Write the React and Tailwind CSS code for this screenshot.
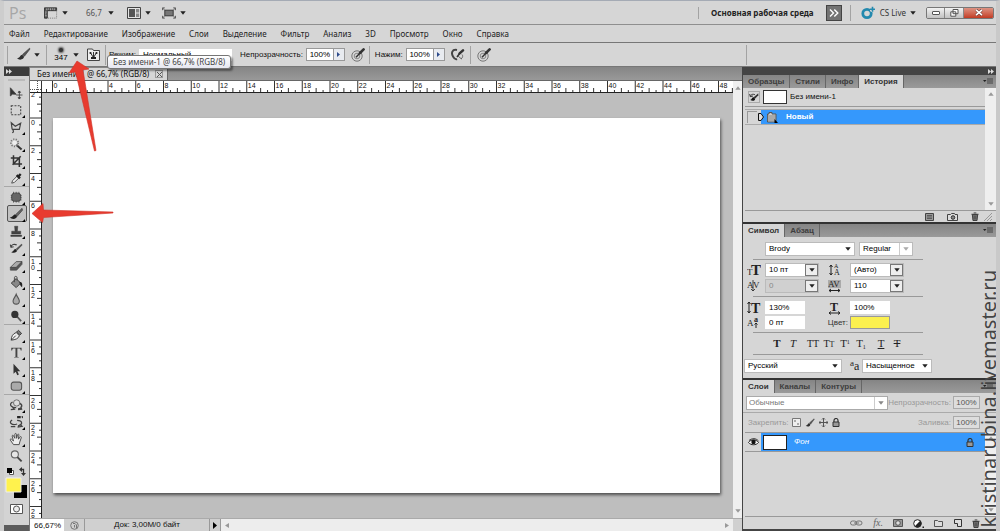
import React from 'react';

const MENU = ['Файл', 'Редактирование', 'Изображение', 'Слои', 'Выделение', 'Фильтр', 'Анализ', '3D', 'Просмотр', 'Окно', 'Справка'];

const UNIT = 27.75;

function Caret({ className = 'text-[#222]' }) {
  return (
    <svg width="6" height="4" viewBox="0 0 6 4" className={`shrink-0 ${className}`}>
      <path d="M0.3 0.3h5.4L3 3.8z" fill="currentColor" />
    </svg>
  );
}

function Divider({ className = 'h-4' }) {
  return <span className={`w-px shrink-0 bg-[#a3a3a3] ${className}`} />;
}

function BrushIcon({ size = 15 }) {
  return (
    <svg width={size} height={size} viewBox="0 0 15 15">
      <path d="M13.6 1.2L6.6 7.4 8.4 9.3 14 2z" fill="#555" stroke="#333" strokeWidth="0.6" />
      <path d="M6.2 7.8C4 7.9 4.6 10.6 1 11.6c2.6 2 7.2 1 7-2z" fill="#2f2f2f" />
    </svg>
  );
}

function TargetPen() {
  return (
    <svg width="14" height="14" viewBox="0 0 14 14" fill="none">
      <circle cx="6" cy="8" r="5.2" stroke="#777" />
      <circle cx="6" cy="8" r="2.8" stroke="#888" />
      <path d="M5 9.2L9.5 4.6" stroke="#333" strokeWidth="1.5" />
      <path d="M9 5L12.6 1.4" stroke="#333" strokeWidth="2.6" strokeLinecap="round" />
    </svg>
  );
}

function TopBar() {
  return (
    <header className="flex h-6 shrink-0 items-center border-b border-[#8f8f8f] bg-[#d6d6d6] pr-[2px] pl-[5px] font-['Noto_Sans']">
      <span className="w-[35px] font-['Open_Sans'] text-[16px] leading-6 text-[#a6a6a6]">Ps</span>
      <button aria-label="Линейки" className="flex items-center gap-1">
        <svg width="14" height="12" viewBox="0 0 15 12">
          <path d="M0.5 0.5h13v3h-10v8h-3z" fill="#555" stroke="#333" />
          <path d="M3 1v2M5 1v1.5M7 1v2M9 1v1.5M11 1v2M1 5h2M1 7h1.5M1 9h2" stroke="#ddd" strokeWidth="0.7" />
          <path d="M4.5 11.5h9v-8" fill="none" stroke="#777" strokeDasharray="1 1" />
        </svg>
        <Caret />
      </button>
      <button className="ml-[18px] flex items-center gap-[6px] text-[8px] text-[#555]">66,7 <Caret /></button>
      <button aria-label="Расположение" className="ml-[13px] flex items-center gap-1">
        <svg width="14" height="12" viewBox="0 0 14 12">
          <path d="M0.5 0.5h13v11h-13z" fill="#e4e4e4" stroke="#444" />
          <path d="M2 2h6v8H2z" fill="#555" />
          <path d="M9 2h3.2v3.4H9zM9 6.5h3.2V10H9z" fill="#888" />
        </svg>
        <Caret />
      </button>
      <button aria-label="Режим экрана" className="ml-[11px] flex items-center gap-1">
        <svg width="14" height="12" viewBox="0 0 15 12">
          <path d="M3 3h9v6H3z" fill="#777" stroke="#333" />
          <path d="M0.5 3V0.5H3M12 0.5h2.5V3M14.5 9v2.5H12M3 11.5H0.5V9M1 1l2 2M14 1l-2 2M1 11l2-2M14 11l-2-2" fill="none" stroke="#555" />
        </svg>
        <Caret />
      </button>
      <div className="ml-auto flex items-center">
        <Divider className="h-3" />
        <button className="mx-3 text-[8px] font-bold text-[#222]">Основная рабочая среда</button>
        <button aria-label="Ещё" className="flex size-4 items-center justify-center border border-[#444] bg-[#737373]">
          <svg width="10" height="8" viewBox="0 0 10 8" fill="none" stroke="#fff" strokeWidth="1.4">
            <path d="M1 0.5L4.5 4 1 7.5M5.3 0.5L8.8 4 5.3 7.5" />
          </svg>
        </button>
        <Divider className="mr-[10px] ml-2 h-4" />
        <button className="mr-[10px] flex items-center gap-1 text-[8px] text-[#333]">
          <svg width="15" height="14" viewBox="0 0 15 14">
            <circle cx="6" cy="7.5" r="4.2" fill="none" stroke="#2389ae" strokeWidth="2.8" />
            <path d="M11.5 1v5M9 3.5h5" stroke="#d6d6d6" strokeWidth="3.4" />
            <path d="M11.5 0.8v5M9 3.3h5" stroke="#2389ae" strokeWidth="1.6" />
          </svg>
          CS Live <Caret />
        </button>
        <div className="flex h-3 overflow-hidden rounded-[2px] border border-[#777]">
          <button aria-label="Свернуть" className="flex w-[18px] items-center justify-center border-r border-[#888] bg-linear-to-b from-[#f2f2f2] to-[#c2c2c2]">
            <span className="h-1 w-2 rounded-[1px] border border-[#555] bg-white" />
          </button>
          <button aria-label="Восстановить" className="flex w-[19px] items-center justify-center border-r border-[#888] bg-linear-to-b from-[#f2f2f2] to-[#c2c2c2]">
            <svg width="9" height="8" viewBox="0 0 9 8" fill="#fff" stroke="#555">
              <path d="M3 0.5h5v4.2H3zM0.8 2.8h5v4.4h-5z" />
            </svg>
          </button>
          <button aria-label="Закрыть" className="flex w-[29px] items-center justify-center bg-linear-to-b from-[#dd9282] to-[#c23a22]">
            <svg width="8" height="7" viewBox="0 0 8 7">
              <path d="M1 0.8L7 6.2M7 0.8L1 6.2" stroke="#6b3a35" strokeWidth="2.8" />
              <path d="M1 0.8L7 6.2M7 0.8L1 6.2" stroke="#fff" strokeWidth="1.6" />
            </svg>
          </button>
        </div>
      </div>
    </header>
  );
}

function MenuBar() {
  return (
    <nav className="flex h-[17px] shrink-0 items-center gap-[14px] bg-[#d6d6d6] pl-[5px] font-['Noto_Sans'] text-[8px] text-[#222]">
      {MENU.map((item) => (
        <button key={item}>{item}</button>
      ))}
    </nav>
  );
}

function PercentField({ id, label }) {
  return (
    <>
      <label htmlFor={id}>{label}</label>
      <span className="ml-[3px] flex h-[13px] border border-[#999]">
        <input id={id} defaultValue="100%" className="w-[26px] bg-white text-center text-[8px] font-normal text-black" />
        <button aria-label={label} className="flex w-[11px] items-center justify-center border-l border-[#999] bg-[#e8ebf0]">
          <svg width="3" height="5" viewBox="0 0 3 5"><path d="M0 0l3 2.5L0 5z" fill="#2c4a8a" /></svg>
        </button>
      </span>
    </>
  );
}

function OptionsBar() {
  return (
    <div className="relative flex h-[25px] shrink-0 items-center border-t border-b border-[#777] bg-[#d6d6d6] pl-[3px] text-[8px] text-[#111]">
      <Divider className="h-[18px]" />
      <button aria-label="Кисть" className="ml-2 flex items-center gap-[3px]"><BrushIcon /><Caret /></button>
      <Divider className="ml-[6px] h-5" />
      <button className="ml-[7px] flex items-center gap-[5px]">
        <span className="flex w-[14px] flex-col items-center gap-px leading-[9px] text-black">
          <span className="size-1 rounded-full bg-[#333] shadow-[0_0_2px_1px_#555]" />
          347
        </span>
        <Caret />
      </button>
      <button aria-label="Панель кистей" className="ml-2">
        <svg width="13" height="13" viewBox="0 0 13 13">
          <path d="M0.5 1h5l1 1.5h6v10H0.5z" fill="#eee" stroke="#444" />
          <path d="M3.3 4.5L6.4 9.5M9.5 4.5L6.6 9.5M6.5 4v5" stroke="#333" />
          <circle cx="3.5" cy="5" r="1.1" fill="#222" /><circle cx="9.5" cy="5" r="1.1" fill="#222" />
          <path d="M4 9h5v2H4z" fill="#222" />
        </svg>
      </button>
      <Divider className="ml-[5px] h-5" />
      <label htmlFor="mode" className="ml-[3px] w-[30px]">Режим:</label>
      <select id="mode" className="h-3 w-[93px] appearance-none bg-white pl-1 text-[8px] leading-3 text-black">
        <option>Нормальный</option>
      </select>
      <span className="ml-2 flex items-center"><PercentField id="opacity" label="Непрозрачность:" /></span>
      <button aria-label="Перо: непрозрачность" className="ml-[6px]"><TargetPen /></button>
      <Divider className="ml-1 h-[18px]" />
      <span className="ml-[5px] flex items-center"><PercentField id="flow" label="Нажим:" /></span>
      <button aria-label="Аэрограф" className="ml-[6px]">
        <svg width="14" height="13" viewBox="0 0 14 13" fill="none">
          <path d="M6 2C1 1 0 5 2 8.5s4 2.5 4 2.5" stroke="#444" strokeWidth="2" />
          <path d="M6 9l3-4" stroke="#333" strokeWidth="1.5" />
          <path d="M8.6 5.4L12 2.4" stroke="#333" strokeWidth="2.6" strokeLinecap="round" />
          <path d="M11 6.5c1 1 1 3-1 4.5M7 8l3.5 3" stroke="#666" />
        </svg>
      </button>
      <Divider className="ml-[5px] h-[18px]" />
      <button aria-label="Перо: размер" className="ml-[6px]"><TargetPen /></button>
      <div className="grow" />
      <Divider className="mr-[249px] h-5" />
      <div
        role="tooltip"
        className="absolute top-3 left-[103px] z-20 rounded-[3px] border border-[#767676] bg-linear-to-b from-white to-[#e6e7f0] px-[5px] font-['Noto_Sans'] text-[8px] leading-3 whitespace-nowrap text-[#444] shadow-[2px_2px_2px_#0006]"
      >
        Без имени-1 @ 66,7% (RGB/8)
      </div>
    </div>
  );
}

const TOOLS = [
  [
    ['Перемещение', <path d="M1.5 2v9l2.500-2 4 .2zM11.5 6v8M8 10h7M11.5 5.500l1.300 1.600h-2.600zM11.500 14.500l1.300-1.600h-2.600z" fill="#333" stroke="#444" />],
    ['Прямоугольная область', <path d="M2.500 3h10.500v10H2.500z" fill="none" stroke="#444" strokeWidth="1.200" strokeDasharray="2.200 1.400" />],
    ['Лассо', <path d="M3.500 10.500L2.500 3 7 7l6-3.500-1.500 7h-8c2 .5 2 3.500 0 3.500" fill="none" stroke="#444" strokeWidth="1.300" />],
    ['Волшебная палочка', <><path d="M8 8.500l6 5.500" stroke="#333" strokeWidth="2.200" /><circle cx="6.200" cy="6.500" r="4" fill="none" stroke="#777" strokeWidth="2" strokeDasharray="1.300 1.500" /><circle cx="6.200" cy="6.500" r="2.500" fill="#eee" /></>],
    ['Рамка', <path d="M5 1.500V11h9.500M2 4.500h9.500v10M4 12l9-9.500" fill="none" stroke="#333" strokeWidth="1.700" />],
    ['Пипетка', <><path d="M3 13.500l1-2.800 5-5 2 2-5 5z" fill="#eee" stroke="#444" /><path d="M8.500 4.500l3.700 3.700M10 6.500L13 3.300" stroke="#222" strokeWidth="2.600" /></>],
  ],
  [
    ['Заплатка', <><path d="M5 2v12M8 2v12M11 2v12M2 6h12M2 8.500h12M2 11h12" stroke="#555" /><rect x="3" y="3.500" width="10" height="9" rx="3" fill="#666" stroke="#444" /></>],
    ['Кисть', <><path d="M14.500 1.500L7.200 8.600l1.800 1.800L15 3.500z" fill="#666" stroke="#333" strokeWidth="0.700" /><path d="M6.800 8.400c-2.300 0-1.800 2.800-6 3.400 3 2.600 8.500 1.400 8-1.800z" fill="#222" /></>],
    ['Штамп', <path d="M6.200 2.500h3.600L9.300 8H13v3H3V8h3.700zM2 12.300h12v1.500H2z" fill="#444" stroke="#333" strokeWidth="0.500" />],
    ['Архивная кисть', <><path d="M14 3L7.500 9l1.600 1.600L15 4.500z" fill="#555" /><path d="M7.200 9c-2 0-1.500 2.600-4.700 3.400 3 1.600 6.600.3 6.300-1.800z" fill="#222" /><path d="M2 7c.8-3.200 4-4 6.500-2.700M1.500 4l.7 3 3-.6" fill="none" stroke="#444" strokeWidth="1.300" /></>],
    ['Ластик', <><path d="M1.500 10.500L8 4h6.500L8 10.500z" fill="#aaa" stroke="#555" /><path d="M1.500 10.500H8L14.500 4v3l-6 6.500h-7z" fill="#555" stroke="#444" strokeWidth="0.700" /></>],
    ['Заливка', <><path d="M2.500 9L8 4l5 5-5 5z" fill="#888" stroke="#333" /><path d="M6 8V3c0-2 3-2 3 0v3" fill="none" stroke="#444" /><path d="M11.500 7.500c3.500 0 3.500 3.500 3 6-2-1-2.500-3-3-6z" fill="#222" /></>],
    ['Размытие', <path d="M8 2.500C7 5.500 4.500 7.500 4.500 10a3.500 3.500 0 007 0C11.500 7.500 9 5.500 8 2.500z" fill="#aaa" stroke="#555" strokeWidth="1.200" />],
    ['Затемнитель', <><path d="M9 8.500l4.500 5" stroke="#555" strokeWidth="1.800" /><circle cx="6.500" cy="6" r="4" fill="#333" /></>],
  ],
  [
    ['Перо', <><path d="M2.500 13.500c0-4 1.500-7 5.500-8.500l3.500 3.500c-1 3.500-4.500 4.500-9 5z" fill="#eee" stroke="#333" /><path d="M2.500 13.500l5-5" stroke="#333" /><path d="M8.500 4.500l2-2L14 6l-2 2z" fill="#777" stroke="#333" /></>],
    ['Текст', <path d="M2.500 3H14v3h-1c-.2-1.400-.7-2-2-2H9.300v8.400c0 .8.300 1 1.500 1v.6H5.700v-.6c1.200 0 1.500-.2 1.500-1V4H5.500c-1.300 0-1.800.6-2 2h-1z" fill="#444" />],
    ['Выделение контура', <path d="M5 2v11l2.500-2.200 1.700 4 1.800-.8-1.700-3.800h3.200z" fill="#333" />],
    ['Фигура', <rect x="2.500" y="3.500" width="11.500" height="9" rx="2.500" fill="#aaa" stroke="#555" strokeWidth="1.200" />],
  ],
  [
    ['3D поворот', <><path d="M4 4.500C-1 7 3 11 8 10.800M2 13l4-.5-2.500-3M12 6c4 2 2 6-2 6M13 9.500l1 3-4 .3" fill="none" stroke="#444" strokeWidth="1.400" /><circle cx="8.500" cy="5.500" r="3.500" fill="#ddd" stroke="#666" /></>],
    ['3D камера', <><path d="M3.500 5.500C-1 8 3 12 9 10M2 13h5M9 6c6 0 7 5 1 6M12 10l2.500 2.500-5 1" fill="none" stroke="#444" strokeWidth="1.400" /><path d="M9 1h4v2.500H9zM13.500 2l2-1v3z" fill="#222" /></>],
    ['Рука', <path d="M5 14L1.500 9c-.5-1.500 1-1.500 1.500-.8L5 10 3.500 4.500c0-1.200 1.400-1.200 1.600 0L6.500 7V2.500c.1-1.200 1.600-1.200 1.700 0L8.500 7l1-4c.4-1 1.600-.8 1.500.3L10.500 8l1.800-2.500c.7-1 1.700-.2 1.400.7L12 11l-.7 3z" fill="#eee" stroke="#444" />],
    ['Масштаб', <><circle cx="6.500" cy="6" r="3.900" fill="#e6e6e6" stroke="#666" strokeWidth="1.200" /><path d="M9.300 9l4.700 4.700" stroke="#444" strokeWidth="2" /></>],
  ],
];

function ToolBar() {
  return (
    <aside className="flex w-[26px] shrink-0 flex-col border-r border-[#777] bg-[#d3d3d3]">
      <div className="flex h-[9px] shrink-0 items-center bg-[#3d3d3d] pl-[2px]"><Chevrons /></div>
      <div className="mx-1 my-[3px] h-[2px] shrink-0 bg-[#bbb]" />
      {TOOLS.map((group, g) => (
        <div key={g} className={g ? 'border-t border-[#a8a8a8] pt-px' : ''}>
          {group.map(([name, icon]) => (
            <button
              key={name}
              aria-label={name}
              className={
                name === 'Кисть'
                  ? 'mx-auto flex h-[17px] w-5 items-center justify-center rounded-[2px] border border-[#555] bg-[#c2c2c2]'
                  : 'mx-auto flex h-[17px] w-5 items-center justify-center'
              }
            >
              <svg width="17" height="16" viewBox="0 0 17 16" className="shrink-0">
                <g transform="translate(1 1) scale(0.9)">{icon}</g>
                {name !== 'Перемещение' && name !== 'Масштаб' && <path d="M17 13v3h-3z" fill="#000" />}
              </svg>
            </button>
          ))}
        </div>
      ))}
      <svg width="24" height="54" viewBox="0 0 24 54" className="mt-px shrink-0">
        <path d="M5.500 5.500h4v4h-4z" fill="#fff" stroke="#555" />
        <path d="M3 3h5v5H3z" fill="#000" />
        <path d="M17 4.500h2.500v4" fill="none" stroke="#333" strokeWidth="1.300" />
        <path d="M15 4.500l3-2.500v5zM19.500 11L17 8h5z" fill="#333" />
        <path d="M10 20h13v13H10z" fill="#000" />
        <path d="M2 13h15v14H2z" fill="#fff24d" stroke="#eee" />
        <path d="M6.500 39.500h12v9h-12z" fill="#fff" stroke="#555" />
        <circle cx="12.500" cy="44" r="3" fill="#eee" stroke="#555" />
      </svg>
      <div className="grow" />
      <div className="h-[6px] shrink-0 bg-[#5c5c5c]" />
    </aside>
  );
}

function Chevrons() {
  return (
    <svg width="6" height="5" viewBox="0 0 6 5"><path d="M0 0l3 2.500L0 5zM3 0l3 2.500L3 5z" fill="#ddd" /></svg>
  );
}

function HorizontalRuler() {
  const marks = Array.from({ length: 100 }, (_, i) => i);
  return (
    <svg width="100%" height="12" className="block shrink-0 border-b border-[#222] bg-white">
      {marks.map((i) => {
        const x = 22.5 + (i * UNIT) / 4;
        if (i % 4) return <path key={i} d={`M${x} ${i % 2 ? 9 : 7}v4`} stroke="#333" />;
        return (
          <g key={i}>
            <path d={`M${x} 0v12`} stroke="#333" />
            <text x={x + 1} y="7" fontSize="7" fill="#111">{i / 2}</text>
          </g>
        );
      })}
      <path d="M0 8.500h11M7.500 0v12" stroke="#555" strokeDasharray="1 1" />
      <path d="M11.500 0v12M16.500 8v4" stroke="#333" />
    </svg>
  );
}

function VerticalRuler() {
  const marks = Array.from({ length: 62 }, (_, i) => i - 4);
  return (
    <div className="w-3 shrink-0 overflow-hidden border-r border-[#222] bg-white">
      <svg width="11" height="425">
        {marks.map((i) => {
          const y = 25 + (i * UNIT) / 4;
          if (i % 4) return <path key={i} d={`M${i % 2 ? 9 : 7} ${y}h4`} stroke="#333" />;
          return (
            <g key={i}>
              <path d={`M0 ${y}h11`} stroke="#333" />
              <text y={y + 7} fontSize="7" fill="#111">
                {String(Math.abs(i / 2)).split('').map((digit, n) => (
                  <tspan key={n} x="1" dy={n * 6}>{digit}</tspan>
                ))}
              </text>
            </g>
          );
        })}
      </svg>
    </div>
  );
}

function DocumentArea() {
  return (
    <main className="flex min-w-0 grow flex-col">
      <div className="flex h-[14px] shrink-0 items-end border-b border-[#666] bg-linear-to-b from-[#858585] to-[#999]">
        <div className="flex h-3 items-center gap-[6px] border-r border-[#666] bg-[#d6d6d6] pr-1 pl-[7px] font-['Noto_Sans'] text-[8px] whitespace-nowrap text-[#111]">
          Без имени-1 @ 66,7% (RGB/8)
          <button aria-label="Закрыть документ" className="flex size-2 items-center justify-center border border-[#999]">
            <svg width="5" height="5" viewBox="0 0 5 5"><path d="M0 0l5 5M5 0L0 5" stroke="#555" /></svg>
          </button>
        </div>
      </div>
      <div className="flex min-h-0 grow">
        <div className="flex min-w-0 grow flex-col">
          <HorizontalRuler />
          <div className="flex min-h-0 grow">
            <VerticalRuler />
            <div className="flex grow bg-[#bebebe] pt-[25px] pr-[13px] pb-[25px] pl-[11px]">
              <div className="grow bg-white shadow-[1px_2px_3px_#0009]" />
            </div>
          </div>
        </div>
        <div className="flex w-[9px] shrink-0 flex-col items-center justify-between bg-[#efefef] py-[5px]">
          <Caret className="rotate-180 text-[#999]" />
          <Caret className="text-[#999]" />
        </div>
      </div>
      <footer className="flex h-[13px] shrink-0 items-center border-t border-[#aaa] bg-[#d0d0d0] text-[8px] text-[#111]">
        <input aria-label="Масштаб" defaultValue="66,67%" className="h-full w-[34px] bg-white pl-1" />
        <button aria-label="Версии" className="mx-1 flex w-3 justify-center">
          <svg width="9" height="9" viewBox="0 0 9 9" fill="none" stroke="#777">
            <circle cx="4.500" cy="4.500" r="3.800" /><path d="M3 2.500h2l1.500 1.500v3M4.500 4v2.500" />
          </svg>
        </button>
        <div className="flex h-full w-[126px] items-center justify-center border-x border-[#999]">Док: 3,00М/0 байт</div>
        <button aria-label="Сведения" className="flex h-full w-[10px] items-center justify-center">
          <svg width="4" height="7" viewBox="0 0 4 7"><path d="M0 0l4 3.500L0 7z" fill="#000" /></svg>
        </button>
        <div className="flex h-full grow items-center justify-between border-l border-[#999] bg-[#ededed] px-1">
          <svg width="4" height="5" viewBox="0 0 4 5"><path d="M4 0v5L0 2.500z" fill="#999" /></svg>
          <svg width="4" height="5" viewBox="0 0 4 5"><path d="M0 0v5l4-2.500z" fill="#999" /></svg>
        </div>
        <div className="h-full w-[9px] bg-[#d0d0d0]" />
      </footer>
    </main>
  );
}

function PanelTabs({ tabs, active }) {
  return (
    <div role="tablist" className="flex h-[13px] shrink-0 items-stretch bg-linear-to-b from-[#858585] to-[#9a9a9a] text-[8px] font-bold">
      {tabs.map((tab) => (
        <button
          key={tab}
          role="tab"
          aria-selected={tab === active}
          className={
            tab === active
              ? 'border-r border-[#666] bg-[#d6d6d6] px-[5px] text-[#333]'
              : 'border-r border-[#666] px-[5px] text-[#3d3d3d]'
          }
        >
          {tab}
        </button>
      ))}
      <span className="mr-[3px] ml-auto flex items-center gap-px">
        <svg width="10" height="7" viewBox="0 0 10 7">
          <path d="M0 2h3.500L1.700 4z" fill="#222" />
          <path d="M4 1h6M4 3h6M4 5h6" stroke="#444" />
        </svg>
      </span>
    </div>
  );
}

function Select({ label, value, boxed, disabled, faded, className = '' }) {
  return (
    <span className={`relative flex h-[14px] border border-[#bbb] ${className}`}>
      <select
        aria-label={label}
        disabled={disabled}
        className={`w-full appearance-none pl-[3px] text-[8px] leading-3 ${disabled ? 'bg-[#d0d0d0] text-[#888] opacity-100' : 'bg-white text-black'}`}
      >
        <option>{value}</option>
      </select>
      <span
        className={`pointer-events-none absolute inset-y-0 right-0 flex w-[13px] items-center justify-center ${boxed ? 'border border-[#777] bg-[#eee]' : ''} ${faded ? 'border-l border-[#ccc]' : ''}`}
      >
        <Caret className={faded ? 'text-[#aaa]' : 'text-[#222]'} />
      </span>
    </span>
  );
}

function ScrollStrip() {
  return (
    <div className="flex w-[11px] shrink-0 flex-col items-center justify-between bg-[#efefef] py-1">
      <Caret className="rotate-180 text-[#999]" />
      <Caret className="text-[#999]" />
    </div>
  );
}

function Trash() {
  return (
    <svg width="8" height="9" viewBox="0 0 9 10">
      <path d="M1.500 3h6l-.7 6.500H2.200z" fill="#888" stroke="#333" />
      <path d="M0.500 2.500h8M3 1h3M3.500 4v4.500M5.500 4v4.500" stroke="#333" />
    </svg>
  );
}

function HistoryPanel() {
  return (
    <section className="flex h-[147px] shrink-0 flex-col">
      <PanelTabs tabs={['Образцы', 'Стили', 'Инфо', 'История']} active="История" />
      <div className="flex min-h-0 grow pl-[2px]">
        <div className="grow">
          <div className="flex h-[19px] items-center border-b border-[#999] pl-[3px] text-[8px] text-[#111]">
            <span className="flex size-3 items-center justify-center border border-[#aaa]">
              <svg width="10" height="10" viewBox="0 0 15 15">
                <path d="M14 2L7 8l2 2 5-5z" fill="#333" />
                <path d="M7 8c-3 0-2 3-5 4 3 2 8 1 7-2z" fill="#111" />
                <path d="M2 7c1-4 4-4 7-3M1 3l1 4 4-1" fill="none" stroke="#333" strokeWidth="1.500" />
              </svg>
            </span>
            <span className="mx-[3px] h-[14px] w-6 border border-[#333] bg-white" />
            Без имени-1
          </div>
          <div className="mt-[2px] flex h-4 border-y border-[#aaa]">
            <span className="my-px mr-1 ml-[2px] w-[10px] border-t border-l border-[#999]" />
            <div className="flex grow items-center bg-[#3598fc] text-[8px] font-bold text-white">
              <svg width="20" height="12" viewBox="0 0 20 12" className="-ml-[3px]">
                <path d="M0.500 2.500H3L5.500 6 3 9.500H0.500z" fill="#ddd" stroke="#111" />
                <path d="M9.500 3H11V1.500h3V3h4v8H9.500z" fill="#ccc" stroke="#555" />
                <path d="M9 5h9M9 7h9M9 9h9" stroke="#777" strokeWidth="0.800" />
                <path d="M16.500 8l3.500 4h-3.500z" fill="#000" />
              </svg>
              <span className="ml-2">Новый</span>
            </div>
          </div>
        </div>
        <ScrollStrip />
      </div>
      <div className="ml-[2px] flex h-3 shrink-0 items-center justify-end gap-[13px] border-t border-[#999]">
        <button aria-label="Новый документ">
          <svg width="9" height="8" viewBox="0 0 9 8"><path d="M0.500 0.500h8v7h-8z" fill="#999" stroke="#444" /><path d="M2 2.500h5M2 4h5M2 5.500h5" stroke="#444" strokeWidth="0.700" /></svg>
        </button>
        <button aria-label="Новый снимок">
          <svg width="11" height="8" viewBox="0 0 11 8"><path d="M0.500 1.500h3l1-1h3l.5 1h2.500v6h-10z" fill="#ddd" stroke="#444" /><circle cx="6" cy="4.500" r="1.800" fill="#888" stroke="#333" /></svg>
        </button>
        <button aria-label="Удалить состояние"><Trash /></button>
        <svg width="8" height="8" viewBox="0 0 8 8" className="mr-1 -ml-2"><path d="M8 0L0 8M8 3L3 8M8 6L6 8" stroke="#999" /></svg>
      </div>
    </section>
  );
}

const serif = "font-['Liberation_Serif']";

function Field({ label, value }) {
  return <input aria-label={label} defaultValue={value} className="h-[13px] w-10 bg-white pl-1 text-[8px] text-black" />;
}

function GlyphIcon({ children }) {
  return (
    <svg width="14" height="14" viewBox="0 0 14 14" className="-my-px shrink-0" fill="#222" fontFamily="Liberation Serif">
      {children}
    </svg>
  );
}

function CharRow({ children }) {
  return <div className="grid grid-cols-[18px_54px_31px_54px] items-center">{children}</div>;
}

function CharacterPanel() {
  const rule = <div className="ml-[10px] h-px w-[170px] bg-[#999]" />;
  return (
    <section className="flex h-[154px] shrink-0 flex-col">
      <PanelTabs tabs={['Символ', 'Абзац']} active="Символ" />
      <div className="flex grow flex-col pt-[5px]">
        <div className="mb-[3px] flex gap-1 pl-[22px]">
          <Select label="Шрифт" value="Brody" className="w-[90px]" />
          <Select label="Начертание" value="Regular" faded className="w-[54px]" />
        </div>
        {rule}
        <div className="my-[3px] flex flex-col gap-[2px] pl-1">
          <CharRow>
            <GlyphIcon><text x="0" y="12" fontSize="9">T</text><text x="4" y="12" fontSize="15" fontWeight="bold">T</text></GlyphIcon>
            <Select label="Кегль" value="10 пт" boxed />
            <span className="flex justify-center"><GlyphIcon><text x="6" y="5" fontSize="6">A</text><text x="6" y="12" fontSize="8">A</text><path d="M3 2v10M1.500 4L3 2l1.500 2M1.500 10L3 12l1.500-2" fill="none" stroke="#222" /></GlyphIcon></span>
            <Select label="Интерлиньяж" value="(Авто)" boxed />
          </CharRow>
          <CharRow>
            <GlyphIcon><text x="0" y="9" fontSize="9">A</text><text x="6" y="9" fontSize="9">V</text><path d="M6 1v11M4 10l2 2 2-2" fill="none" stroke="#222" strokeWidth="0.800" /></GlyphIcon>
            <Select label="Кернинг" value="0" boxed disabled />
            <span className="flex justify-center"><GlyphIcon><path d="M0 1h13v8H0z" fill="#aaa" /><text x="0" y="8" fontSize="9">AV</text><path d="M1 11.500h11M3 10l-2 1.500L3 13M10 10l2 1.500-2 1.500" fill="none" stroke="#222" /></GlyphIcon></span>
            <Select label="Трекинг" value="110" boxed />
          </CharRow>
        </div>
        {rule}
        <div className="mt-1 mb-[3px] flex flex-col gap-[2px] pl-1">
          <CharRow>
            <GlyphIcon><path d="M2 1v11M0.500 3L2 1l1.500 2M0.500 10L2 12l1.500-2" fill="none" stroke="#222" /><text x="4" y="12" fontSize="14" fontWeight="bold">T</text></GlyphIcon>
            <Field label="Масштаб по вертикали" value="130%" />
            <span className="flex justify-center"><GlyphIcon><text x="2" y="10" fontSize="12" fontWeight="bold">T</text><path d="M1 12h11M3 10.500L1 12l2 1.500M10 10.500l2 1.500-2 1.500" fill="none" stroke="#222" /></GlyphIcon></span>
            <Field label="Масштаб по горизонтали" value="100%" />
          </CharRow>
          <CharRow>
            <GlyphIcon><text x="0" y="10" fontSize="9">A</text><text x="7" y="6" fontSize="8" fontWeight="bold">a</text><path d="M9 7v5M7.500 8.500L9 7l1.500 1.500" fill="none" stroke="#222" /></GlyphIcon>
            <Field label="Смещение" value="0 пт" />
            <label htmlFor="color" className="flex justify-end pr-[2px] text-[8px] whitespace-nowrap text-[#333]">Цвет:</label>
            <button id="color" aria-label="Цвет" className="h-[13px] w-10 border border-[#999] bg-[#fbf04f]" />
          </CharRow>
        </div>
        {rule}
        <div className={`flex h-[21px] items-center pl-[26px] text-[11px] text-[#222] ${serif}`}>
          <button className="w-4 font-bold">T</button>
          <button className="w-4 italic">T</button>
          <button className="ml-1 w-4 text-[10px]">TT</button>
          <button className="w-4 text-[10px]">T<span className="text-[8px]">T</span></button>
          <button className="w-4">T<sup className="text-[6px]">1</sup></button>
          <button className="w-4">T<sub className="text-[6px]">1</sub></button>
          <button className="ml-1 w-4 underline">T</button>
          <button className="w-4 line-through">T</button>
        </div>
        {rule}
        <div className="mt-1 flex items-center pl-px">
          <Select label="Язык" value="Русский" className="w-[98px]" />
          <span className={`ml-2 w-3 text-[12px] leading-3 text-[#222] ${serif}`}><sup>a</sup>a</span>
          <Select label="Сглаживание" value="Насыщенное" className="w-[70px]" />
        </div>
      </div>
    </section>
  );
}

function LayersPanel() {
  return (
    <section className="flex min-h-0 grow flex-col">
      <PanelTabs tabs={['Слои', 'Каналы', 'Контуры']} active="Слои" />
      <div className="flex h-5 shrink-0 items-center border-b border-[#aaa] pl-[3px] text-[8px] text-[#999]">
        <span className="relative flex h-[14px] w-[144px] border border-[#aaa] bg-white">
          <select aria-label="Режим наложения" className="w-full appearance-none pl-[2px] leading-3 text-[#777]"><option>Обычные</option></select>
          <span className="pointer-events-none absolute inset-y-0 right-0 flex w-[13px] items-center justify-center border-l border-[#ccc]">
            <Caret className="text-[#888]" />
          </span>
        </span>
        <label htmlFor="layer-opacity" className="grow pr-[2px] text-right">Непрозрачность:</label>
        <input id="layer-opacity" defaultValue="100%" className="mr-4 h-[13px] w-[27px] border border-[#aaa] bg-[#ddd] text-center text-[#555]" />
      </div>
      <div className="flex h-[19px] shrink-0 items-center pl-[5px] text-[8px] text-[#999]">
        <span className="w-11">Закрепить:</span>
        <div className="flex gap-1">
          <button aria-label="Прозрачные пиксели"><svg width="9" height="9" viewBox="0 0 9 9"><path d="M0.500 0.500h8v8h-8z" fill="#eee" stroke="#777" /><path d="M2 2h2v2H2zM5 5h2v2H5z" fill="#aaa" /></svg></button>
          <button aria-label="Пиксели"><BrushIcon size={10} /></button>
          <button aria-label="Положение"><svg width="9" height="9" viewBox="0 0 9 9"><path d="M4.500 0v9M0 4.500h9M3 1.500L4.500 0 6 1.500M3 7.500L4.500 9 6 7.500M1.500 3L0 4.500 1.500 6M7.500 3L9 4.500 7.500 6" fill="none" stroke="#555" /></svg></button>
          <button aria-label="Всё"><Lock /></button>
        </div>
        <label htmlFor="fill" className="grow pr-[2px] text-right">Заливка:</label>
        <input id="fill" defaultValue="100%" className="mr-4 h-[13px] w-[27px] border border-[#aaa] bg-[#ddd] text-center text-[#555]" />
      </div>
      <div className="flex min-h-0 grow pl-[2px]">
        <div className="grow">
          <div className="flex h-5 items-stretch border-y border-[#999]">
            <button aria-label="Видимость слоя" className="flex w-4 items-center justify-center">
              <svg width="11" height="8" viewBox="0 0 11 8"><path d="M0.500 4.500C3 1 8 1 10.500 4.500 8 7.500 3 7.500 0.500 4.500z" fill="#fff" stroke="#222" /><circle cx="5.500" cy="4" r="2.200" fill="#111" /><path d="M1 2.500C4 0 8 0 10.500 3" fill="none" stroke="#333" /></svg>
            </button>
            <div className="flex grow items-center bg-[#3598fc] pr-[11px] pl-[2px] text-[8px] text-white italic">
              <span className="mr-[7px] h-[15px] w-6 border border-[#222] bg-white" />
              Фон
              <span className="ml-auto"><Lock /></span>
            </div>
          </div>
        </div>
        <ScrollStrip />
      </div>
      <div className="ml-[2px] flex h-[13px] shrink-0 items-center justify-end gap-[10px] border-t border-[#999] pr-4 text-[#666]">
        <button aria-label="Связать слои"><svg width="13" height="6" viewBox="0 0 13 6" fill="none" stroke="#777"><rect x="0.500" y="1" width="6" height="4" rx="2" /><rect x="6" y="1" width="6" height="4" rx="2" /><path d="M4 3h5" /></svg></button>
        <button className={`text-[10px] leading-3 italic ${serif}`}>fx.</button>
        <button aria-label="Маска"><svg width="10" height="8" viewBox="0 0 10 8" fill="#ddd" stroke="#555"><path d="M0.500 0.500h9v7h-9z" fill="#999" /><circle cx="5" cy="4" r="2.300" /></svg></button>
        <button aria-label="Корректирующий слой"><svg width="11" height="9" viewBox="0 0 11 9"><circle cx="4.500" cy="4.500" r="3.800" fill="#fff" stroke="#222" /><path d="M7.200 1.800A3.800 3.800 0 111.800 7.200z" fill="#222" /><path d="M9.500 7.500H11V9H9.500z" fill="#222" /></svg></button>
        <button aria-label="Группа"><svg width="9" height="8" viewBox="0 0 9 8"><path d="M0.500 7.500v-6h3l1 1h4v5z" fill="#ddd" stroke="#555" /></svg></button>
        <button aria-label="Новый слой"><svg width="9" height="8" viewBox="0 0 9 8"><path d="M1.500 0.500h7v7h-4v-3h-3z" fill="#ddd" stroke="#333" /></svg></button>
        <button aria-label="Удалить слой"><Trash /></button>
      </div>
    </section>
  );
}

function Lock() {
  return (
    <svg width="8" height="9" viewBox="0 0 8 9">
      <path d="M2 4V2.500a2 2 0 014 0V4" fill="none" stroke="#333" strokeWidth="1.200" />
      <path d="M1 4h6v4.500H1z" fill="#999" stroke="#333" />
    </svg>
  );
}

function Arrows() {
  return (
    <svg width="120" height="230" viewBox="0 0 120 230" className="pointer-events-none absolute -top-px -left-1 z-30">
      <g fill="#e83b2f" stroke="#d03328" strokeWidth="0.6" strokeLinejoin="round">
        <path d="M77 61L89 69 83 70 96 150.500 94.500 151 75.500 72 69 73z" />
        <path d="M32 213.500L43 203.500 43.500 210 113 212 113 213 43.500 217.500 42.500 222.500z" />
      </g>
    </svg>
  );
}

export default function App() {
  return (
    <div className="relative flex h-screen min-h-[531px] flex-col overflow-hidden border-t border-r-4 border-l-4 border-t-[#a5abb5] border-r-[#c9c9c9] border-l-[#cdcdcd] bg-[#d6d6d6] font-['Liberation_Sans',sans-serif]">
      <TopBar />
      <MenuBar />
      <OptionsBar />
      <div className="flex min-h-0 grow">
        <ToolBar />
        <DocumentArea />
        <aside className="flex w-[254px] shrink-0 flex-col border-b-2 border-l border-[#444] bg-[#d6d6d6]">
          <div className="flex h-2 shrink-0 items-center justify-end bg-[#444] pr-[2px]"><Chevrons /></div>
          <HistoryPanel />
          <div className="h-[2px] shrink-0 bg-[#333]" />
          <CharacterPanel />
          <div className="h-[2px] shrink-0 bg-[#333]" />
          <LayersPanel />
        </aside>
      </div>
      <Arrows />
      <div className="pointer-events-none absolute -right-[3px] bottom-1 z-20 rotate-180 font-['Noto_Sans'] text-[20px] leading-5 text-[#444] [writing-mode:vertical-rl]">
        kristinarubina.livemaster.ru
      </div>
    </div>
  );
}
